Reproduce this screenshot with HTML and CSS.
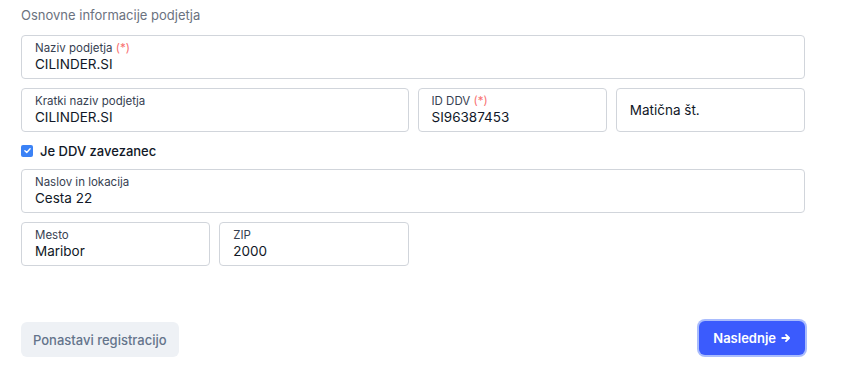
FILE: index.html
```html
<!DOCTYPE html>
<html lang="en">
<head>
  <meta charset="UTF-8" />
  <title>Registracija podjetja</title>
  <link rel="stylesheet" href="styles.css">
</head>
<body>
  <main class="form">
    <h2 class="section-title">Osnovne informacije podjetja</h2>

    <div class="grid">
      <label class="field span-4">
        <span class="field-label">Naziv podjetja <span class="req">(*)</span></span>
        <span class="field-value">CILINDER.SI</span>
      </label>

      <label class="field span-2">
        <span class="field-label">Kratki naziv podjetja</span>
        <span class="field-value">CILINDER.SI</span>
      </label>
      <label class="field">
        <span class="field-label">ID DDV <span class="req">(*)</span></span>
        <span class="field-value">SI96387453</span>
      </label>
      <label class="field empty">
        <span class="field-placeholder">Matična št.</span>
      </label>

      <label class="check span-4">
        <span class="box">
          <svg viewBox="0 0 12 12" width="9" height="9"><path d="M2.5 6.2 L5 8.6 L9.5 3.6" fill="none" stroke="#fff" stroke-width="1.8" stroke-linecap="round" stroke-linejoin="round"/></svg>
        </span>
        Je DDV zavezanec
      </label>

      <label class="field span-4">
        <span class="field-label">Naslov in lokacija</span>
        <span class="field-value">Cesta 22</span>
      </label>

      <label class="field">
        <span class="field-label">Mesto</span>
        <span class="field-value">Maribor</span>
      </label>
      <label class="field">
        <span class="field-label">ZIP</span>
        <span class="field-value">2000</span>
      </label>
    </div>

    <div class="actions">
      <button class="btn btn-reset">Ponastavi registracijo</button>
      <button class="btn btn-next">
        Naslednje
        <svg viewBox="0 0 12 12" width="10" height="10"><path d="M1.5 6 H9.5 M6 2.3 L9.7 6 L6 9.7" fill="none" stroke="#fff" stroke-width="2.2" stroke-linecap="round" stroke-linejoin="round"/></svg>
      </button>
    </div>
  </main>
</body>
</html>
```

FILE: styles.css
```css
body {
  margin: 0;
  font-family: Inter, "Noto Sans", sans-serif;
  background: #fff;
  color: #111827;
}

.form {
  width: 784px;
  padding: 6px 0 0 21px;
}

.section-title {
  margin: 0 0 11px;
  font-size: 13px;
  line-height: 18px;
  font-weight: 400;
  color: #6b7280;
}

.grid {
  display: grid;
  grid-template-columns: repeat(4, 1fr);
  gap: 9px;
}

.span-2 {
  grid-column: span 2;
}

.span-4 {
  grid-column: span 4;
}

.field {
  display: flex;
  flex-direction: column;
  height: 44px;
  box-sizing: border-box;
  padding: 5px 13px;
  border: 1px solid #d1d5db;
  border-radius: 4px;
}

.field-label {
  font-size: 11.5px;
  line-height: 14px;
  color: #374151;
}

.req {
  color: #f87171;
}

.field-value {
  font-size: 13.5px;
  line-height: 18px;
  font-weight: 400;
  color: #111827;
}

.field.empty {
  justify-content: center;
}

.field-placeholder {
  font-size: 13.5px;
  font-weight: 400;
  color: #111827;
}

.check {
  display: flex;
  align-items: center;
  gap: 7px;
  height: 19px;
  font-size: 13px;
  font-weight: 500;
  color: #111827;
}

.box {
  display: flex;
  align-items: center;
  justify-content: center;
  width: 12px;
  height: 12px;
  border-radius: 2px;
  background: #3b82f6;
}

.actions {
  display: flex;
  justify-content: space-between;
  margin-top: 56px;
}

.btn {
  font-family: inherit;
  border: none;
  border-radius: 6px;
  cursor: pointer;
}

.btn-reset {
  height: 35px;
  padding: 0 12px;
  background: #eef1f5;
  color: #64748b;
  font-size: 13px;
  font-weight: 500;
}

.btn-next {
  display: flex;
  align-items: center;
  gap: 5px;
  height: 34px;
  padding: 0 14px;
  margin-top: -1px;
  background: #3b5bfd;
  color: #fff;
  font-size: 13px;
  font-weight: 600;
  box-shadow: 0 0 0 2px #a9bcfd;
}
```
